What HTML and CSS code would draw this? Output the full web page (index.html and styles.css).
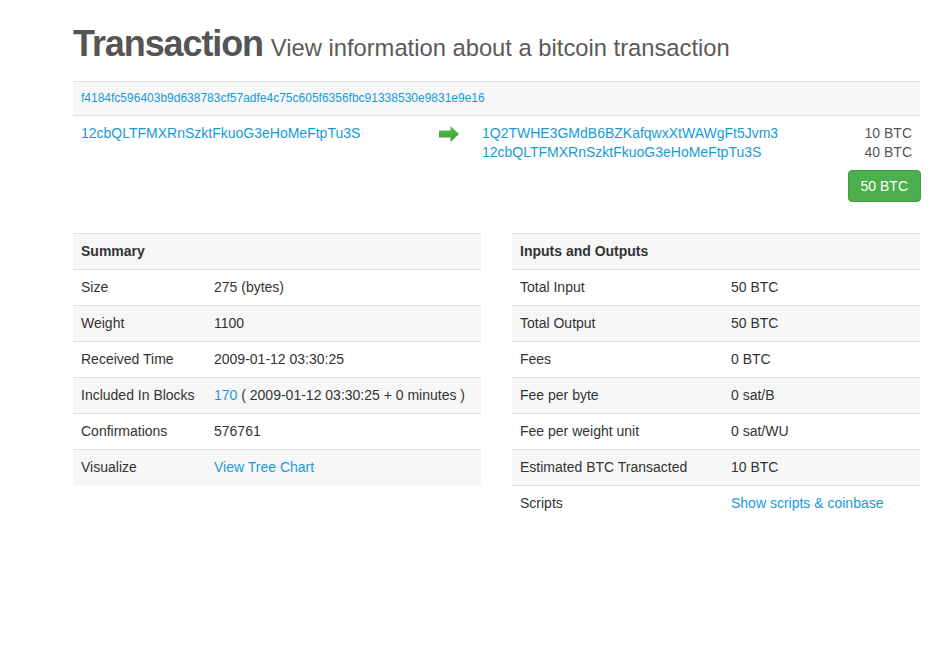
FILE: index.html
```html
<!DOCTYPE html>
<html>
<head>
<meta charset="utf-8">
<link rel="stylesheet" href="styles.css">
</head>
<body>
<div class="container">
  <h1 class="page-title"><span class="title-main">Transaction</span> <small class="title-sub">View information about a bitcoin transaction</small></h1>

  <table class="tx-table">
    <tr class="tx-hash-row">
      <td colspan="3"><a class="hash-link" href="#">f4184fc596403b9d638783cf57adfe4c75c605f6356fbc91338530e9831e9e16</a></td>
    </tr>
    <tr class="tx-io-row">
      <td class="tx-inputs"><a href="#">12cbQLTFMXRnSzktFkuoG3eHoMeFtpTu3S</a></td>
      <td class="tx-arrow">
        <svg width="20" height="16" viewBox="0 0 20 16"><defs><linearGradient id="g" x1="0" y1="0" x2="0" y2="1"><stop offset="0" stop-color="#5fc15a"/><stop offset="1" stop-color="#3a9a36"/></linearGradient></defs><path d="M0 4.5 H11.5 V0 L20 8 L11.5 16 V11.5 H0 Z" fill="url(#g)"/></svg>
      </td>
      <td class="tx-outputs">
        <div class="out-line"><a href="#">1Q2TWHE3GMdB6BZKafqwxXtWAWgFt5Jvm3</a><span class="amt">10 BTC</span></div>
        <div class="out-line"><a href="#">12cbQLTFMXRnSzktFkuoG3eHoMeFtpTu3S</a><span class="amt">40 BTC</span></div>
      </td>
    </tr>
  </table>
  <div class="total-wrap"><span class="btn-total">50 BTC</span></div>

  <div class="info-grid">
    <table class="info-table summary">
      <colgroup><col class="c1"><col></colgroup>
      <tr class="head"><th colspan="2">Summary</th></tr>
      <tr><td>Size</td><td>275 (bytes)</td></tr>
      <tr class="alt"><td>Weight</td><td>1100</td></tr>
      <tr><td>Received Time</td><td>2009-01-12 03:30:25</td></tr>
      <tr class="alt"><td>Included In Blocks</td><td><a href="#">170</a> ( 2009-01-12 03:30:25 + 0 minutes )</td></tr>
      <tr><td>Confirmations</td><td>576761</td></tr>
      <tr class="alt"><td>Visualize</td><td><a href="#">View Tree Chart</a></td></tr>
    </table>
    <table class="info-table io">
      <colgroup><col class="c1"><col></colgroup>
      <tr class="head"><th colspan="2">Inputs and Outputs</th></tr>
      <tr><td>Total Input</td><td>50 BTC</td></tr>
      <tr class="alt"><td>Total Output</td><td>50 BTC</td></tr>
      <tr><td>Fees</td><td>0 BTC</td></tr>
      <tr class="alt"><td>Fee per byte</td><td>0 sat/B</td></tr>
      <tr><td>Fee per weight unit</td><td>0 sat/WU</td></tr>
      <tr class="alt"><td>Estimated BTC Transacted</td><td>10 BTC</td></tr>
      <tr><td>Scripts</td><td><a href="#">Show scripts &amp; coinbase</a></td></tr>
    </table>
  </div>
</div>
</body>
</html>
```
FILE: styles.css
```css
* { box-sizing: border-box; }
body {
  margin: 0;
  background: #fff;
  font-family: "Liberation Sans", Arial, sans-serif;
  font-size: 14px;
  color: #333;
}
a { color: #179bd7; text-decoration: none; }
.container {
  width: 847px;
  margin-left: 73px;
  padding-top: 24px;
}
.page-title {
  margin: 0 0 13px 0;
  line-height: 40px;
  font-weight: normal;
  color: #555;
}
.title-main {
  font-size: 36px;
  font-weight: bold;
  letter-spacing: -1.1px;
}
.title-sub {
  font-size: 23.75px;
  color: #5a5a5a;
}
.tx-table {
  width: 100%;
  border-collapse: collapse;
}
.tx-table td {
  padding: 8px;
  line-height: 19px;
  vertical-align: top;
  border-top: 1px solid #ddd;
}
.tx-hash-row td {
  background: #f7f7f7;
  font-size: 12px;
  padding: 7px 8px;
}
.tx-inputs { width: 358px; }
.tx-arrow { width: 43px; padding-top: 10px !important; }
.tx-arrow svg { display: block; }
.out-line {
  display: flex;
  justify-content: space-between;
}
.amt { color: #555; }
.total-wrap {
  display: flex;
  justify-content: flex-end;
  margin-right: -1px;
}
.btn-total {
  display: inline-block;
  background: #4cae4c;
  border: 1px solid #449d44;
  border-radius: 4px;
  color: #fff;
  padding: 5px 12px;
  line-height: 20px;
  font-size: 14px;
}
.info-grid {
  display: grid;
  grid-template-columns: 408px 408px;
  column-gap: 31px;
  margin-top: 31px;
  align-items: start;
}
.info-table {
  width: 100%;
  border-collapse: collapse;
  table-layout: fixed;
}
.info-table th, .info-table td {
  padding: 8px;
  line-height: 19px;
  border-top: 1px solid #ddd;
  text-align: left;
  vertical-align: top;
  white-space: nowrap;
}
.info-table th { font-weight: bold; }
.info-table .head, .info-table .alt { background: #f7f7f7; }
.summary .c1 { width: 133px; }
.io .c1 { width: 211px; }
```
